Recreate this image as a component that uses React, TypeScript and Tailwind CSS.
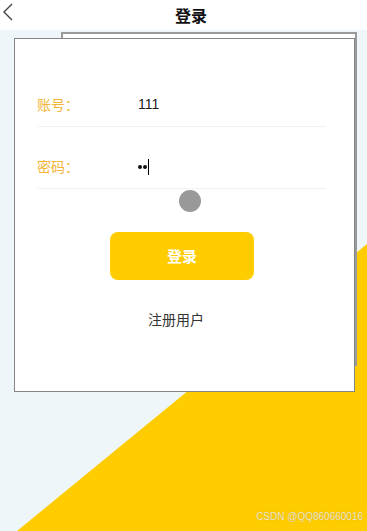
import React from 'react';

const cjk = { fontFamily: '"Noto Sans CJK SC", "Noto Sans", sans-serif' };
const latin = { fontFamily: '"Liberation Sans", Arial, sans-serif' };

function Row({ label, children, className }: { label: string; children: React.ReactNode; className?: string }) {
  return (
    <div className={`ml-[22px] flex h-[44px] w-[289px] items-center border-b border-[#f1f1f1] ${className ?? ''}`}>
      <span className="w-[101px] text-[14px] text-[#f2b53a]">{label}</span>
      {children}
    </div>
  );
}

export default function App() {
  return (
    <div className="relative h-[531px] w-full overflow-hidden bg-[#eff6f9]" style={cjk}>
      {/* yellow background wedge */}
      <svg className="absolute inset-0 h-[531px] w-[367px]" viewBox="0 0 367 531">
        <polygon points="367,244 367,531 17,531" fill="#ffcc00" />
      </svg>

      {/* header */}
      <div className="relative flex h-[30px] items-center justify-center bg-white pl-[15px]">
        <svg className="absolute left-[1px] top-[2px]" width="14" height="20" viewBox="0 0 14 20">
          <path d="M11 2 L3 10 L11 18" fill="none" stroke="#444" strokeWidth="1.4" />
        </svg>
        <span className="text-[16px] font-bold text-[#111]">登录</span>
      </div>

      {/* page behind */}
      <div className="absolute left-[61px] top-[32px] h-[334px] w-[296px] border-2 border-[#9a9a9a] bg-white" />

      {/* login card */}
      <div className="relative ml-[14px] mt-[8px] h-[354px] w-[341px] border border-[#858585] bg-white">
        <Row label="账号：" className="mt-[44px]">
          <span className="text-[14px] text-[#222]" style={latin}>111</span>
        </Row>
        <Row label="密码：" className="mt-[18px]">
          <span className="flex items-center text-[#111]">
            <span className="flex gap-[1px]">
              <span className="h-[4px] w-[4px] rounded-full bg-[#111]" />
              <span className="h-[4px] w-[4px] rounded-full bg-[#111]" />
            </span>
            <span className="ml-[1px] h-[16px] w-[1px] bg-black" />
          </span>
        </Row>

        {/* touch indicator */}
        <div className="absolute left-[164px] top-[151px] h-[22px] w-[22px] rounded-full bg-[#999]" />

        <button className="ml-[95px] mt-[43px] flex h-[48px] w-[144px] items-center justify-center rounded-[8px] bg-[#ffcc00] text-[15px] font-bold text-white">
          登录
        </button>

        <div className="ml-[133px] mt-[29px] text-[14px] leading-[20px] text-[#333]">注册用户</div>
      </div>

      <div
        className="absolute bottom-[7px] right-[4px] text-[10px] text-white/80"
        style={{ ...latin, textShadow: '0 0 1px rgba(0,0,0,0.3)' }}
      >
        CSDN @QQ860660016
      </div>
    </div>
  );
}
